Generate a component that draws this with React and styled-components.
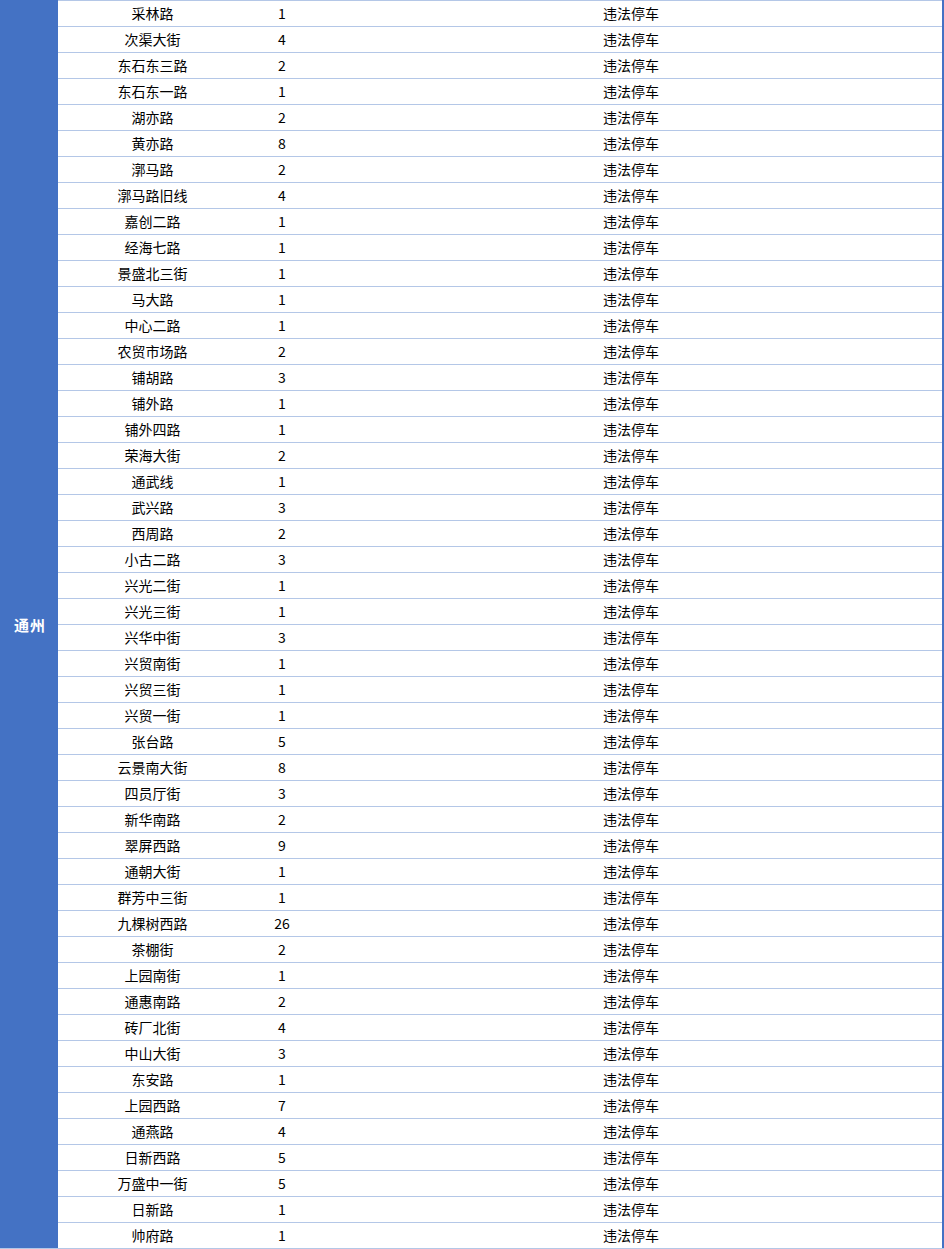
import React from "react";
import styled, { createGlobalStyle } from "styled-components";

const Global = createGlobalStyle`
  html, body {
    margin: 0;
    padding: 0;
    background: #ffffff;
  }
  body {
    font-family: "Noto Sans CJK SC", "Noto Sans", sans-serif;
  }
`;

const rows = [
  ["采林路", 1], ["次渠大街", 4], ["东石东三路", 2], ["东石东一路", 1],
  ["湖亦路", 2], ["黄亦路", 8], ["漷马路", 2], ["漷马路旧线", 4],
  ["嘉创二路", 1], ["经海七路", 1], ["景盛北三街", 1], ["马大路", 1],
  ["中心二路", 1], ["农贸市场路", 2], ["铺胡路", 3], ["铺外路", 1],
  ["铺外四路", 1], ["荣海大街", 2], ["通武线", 1], ["武兴路", 3],
  ["西周路", 2], ["小古二路", 3], ["兴光二街", 1], ["兴光三街", 1],
  ["兴华中街", 3], ["兴贸南街", 1], ["兴贸三街", 1], ["兴贸一街", 1],
  ["张台路", 5], ["云景南大街", 8], ["四员厅街", 3], ["新华南路", 2],
  ["翠屏西路", 9], ["通朝大街", 1], ["群芳中三街", 1], ["九棵树西路", 26],
  ["茶棚街", 2], ["上园南街", 1], ["通惠南路", 2], ["砖厂北街", 4],
  ["中山大街", 3], ["东安路", 1], ["上园西路", 7], ["通燕路", 4],
  ["日新西路", 5], ["万盛中一街", 5], ["日新路", 1], ["帅府路", 1],
];

const Sheet = styled.div`
  display: flex;
  width: 944px;
  border-bottom: 1px solid #b4c7e7;
`;

const Region = styled.div`
  width: 58px;
  flex: none;
  background: #4472c4;
  color: #ffffff;
  font-weight: 700;
  font-size: 15px;
  letter-spacing: 1px;
  display: flex;
  align-items: center;
  justify-content: center;
  padding-left: 2px;
  box-sizing: border-box;
`;

const Body = styled.div`
  flex: 1;
  display: flex;
  flex-direction: column;
  border-right: 2px solid #4472c4;
`;

const Row = styled.div`
  display: grid;
  grid-template-columns: 189px 70px 1fr;
  height: 25px;
  border-top: 1px solid #b4c7e7;
  font-size: 14px;
  color: #000000;
  align-items: center;
`;

const Cell = styled.div`
  text-align: center;
  line-height: 25px;
  padding-left: ${(p) => p.$shift || 0}px;
  white-space: nowrap;
`;

export default function App() {
  return (
    <>
      <Global />
      <Sheet>
        <Region>通州</Region>
        <Body>
          {rows.map(([road, n]) => (
            <Row key={road}>
              <Cell>{road}</Cell>
              <Cell>{n}</Cell>
              <Cell $shift={3}>违法停车</Cell>
            </Row>
          ))}
        </Body>
      </Sheet>
    </>
  );
}
